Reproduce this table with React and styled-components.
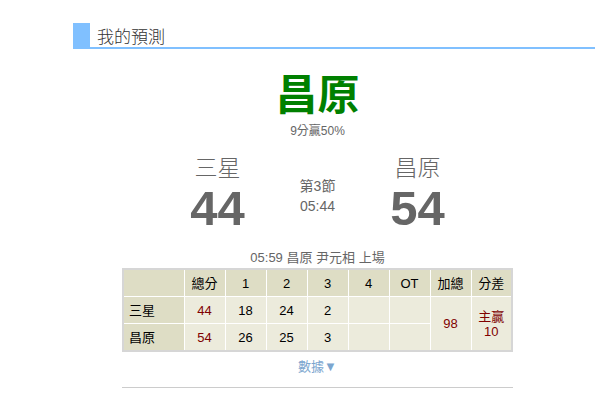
import React from 'react';
import styled, {createGlobalStyle} from 'styled-components';

const Global = createGlobalStyle`
    body {
        margin: 0;
        background: #fff;
        font-family: "Liberation Sans", "Noto Sans CJK TC", sans-serif;
        color: #666;
    }
`;

const Page = styled.div`
    width: 595px;
    height: 399px;
    overflow: hidden;
    padding-top: 23px;
    box-sizing: border-box;
`;

const SectionHead = styled.div`
    margin-left: 73px;
    height: 24px;
    display: flex;
    align-items: center;
    border-bottom: 2px solid #80c0ff;
`;

const HeadMark = styled.div`
    width: 17px;
    height: 24px;
    background: #80c0ff;
    margin-right: 7px;
`;

const HeadText = styled.div`
    font-size: 17px;
    font-weight: 300;
    color: #333;
    padding-top: 1px;
`;

const Main = styled.div`
    width: 391px;
    margin-left: 122px;
    display: flex;
    flex-direction: column;
    align-items: center;
`;

const Winner = styled.div`
    margin-top: 22px;
    font-size: 42px;
    font-weight: bold;
    color: #008000;
    line-height: 50px;
`;

const Small = styled.div`
    font-size: 12px;
    line-height: 16px;
    margin-top: ${p => p.top || 0}px;
`;

const ScoreRow = styled.div`
    margin-top: 15px;
    display: grid;
    grid-template-columns: 100px 100px 100px;
    align-items: center;
`;

const Team = styled.div`
    display: flex;
    flex-direction: column;
    align-items: center;
`;

const TeamName = styled.div`
    font-size: 23px;
    font-weight: 300;
    line-height: 28px;
`;

const Score = styled.div`
    font-size: 49px;
    font-weight: bold;
    line-height: 52px;
`;

const Period = styled.div`
    text-align: center;
    font-size: 14px;
    line-height: 20px;
    padding-top: 4px;
`;

const Event = styled.div`
    margin-top: 16px;
    font-size: 13px;
    line-height: 16px;
`;

const Table = styled.table`
    margin-top: 2px;
    width: 391px;
    border-collapse: collapse;
    border: 2px solid #d6d6d6;
    font-size: 13px;
    color: #000;
    table-layout: fixed;
`;

const Cell = styled.td`
    height: 26px;
    padding: 0;
    text-align: ${p => (p.left ? 'left' : 'center')};
    padding-left: ${p => (p.left ? '5px' : '0')};
    border: 1px solid #fff;
    background: ${p => (p.head ? '#deddc5' : '#ecebdc')};
    color: ${p => (p.red ? '#800000' : '#000')};
    font-weight: normal;
    line-height: 15px;
`;

const Toggle = styled.div`
    margin-top: 7px;
    font-size: 13px;
    line-height: 16px;
    color: #7ca6cf;
`;

const Rule = styled.div`
    margin-top: 12px;
    width: 391px;
    border-top: 1px solid #ccc;
`;

const quarters = ['1', '2', '3', '4', 'OT'];

const rows = [
    {team: '三星', total: '44', q: ['18', '24', '2', '', '']},
    {team: '昌原', total: '54', q: ['26', '25', '3', '', '']},
];

export default function App() {
    return (
        <Page>
            <Global/>
            <SectionHead>
                <HeadMark/>
                <HeadText>我的預測</HeadText>
            </SectionHead>
            <Main>
                <Winner>昌原</Winner>
                <Small top={2}>9分贏50%</Small>
                <ScoreRow>
                    <Team>
                        <TeamName>三星</TeamName>
                        <Score>44</Score>
                    </Team>
                    <Period>第3節<br/>05:44</Period>
                    <Team>
                        <TeamName>昌原</TeamName>
                        <Score>54</Score>
                    </Team>
                </ScoreRow>
                <Event>05:59 昌原 尹元相 上場</Event>
                <Table>
                    <colgroup>
                        <col style={{width: 61}}/>
                        {Array.from({length: 8}).map((_, i) => <col key={i}/>)}
                    </colgroup>
                    <thead>
                    <tr>
                        <Cell as="th" head/>
                        <Cell as="th" head>總分</Cell>
                        {quarters.map(q => <Cell as="th" head key={q}>{q}</Cell>)}
                        <Cell as="th" head>加總</Cell>
                        <Cell as="th" head>分差</Cell>
                    </tr>
                    </thead>
                    <tbody>
                    {rows.map((r, i) => (
                        <tr key={r.team}>
                            <Cell head left>{r.team}</Cell>
                            <Cell red>{r.total}</Cell>
                            {r.q.map((v, j) => <Cell key={j}>{v}</Cell>)}
                            {i === 0 && <Cell red rowSpan={2}>98</Cell>}
                            {i === 0 && <Cell red rowSpan={2}>主贏<br/>10</Cell>}
                        </tr>
                    ))}
                    </tbody>
                </Table>
                <Toggle>數據▼</Toggle>
                <Rule/>
            </Main>
        </Page>
    );
}
